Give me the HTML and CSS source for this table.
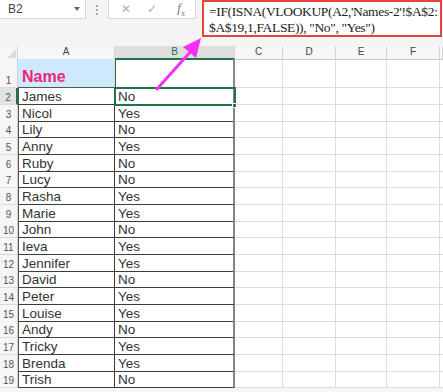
FILE: index.html
```html
<!DOCTYPE html>
<html>
<head>
<meta charset="utf-8">
<link rel="stylesheet" href="styles.css">
</head>
<body>
<div class="page">
  <div class="topbar">
    <div class="namebox"><span class="nb-text">B2</span><span class="nb-arrow"></span></div>
    <div class="dots"><i></i><i></i><i></i></div>
    <div class="funcs">
      <span class="fbtn x">&#x2715;</span>
      <span class="fbtn ok">&#x2713;</span>
      <span class="fbtn fx"><i>f</i><sub>x</sub></span>
    </div>
    <div class="formula">=IF(ISNA(VLOOKUP(A2,'Names-2'!$A$2:<br>$A$19,1,FALSE)), "No", "Yes")</div>
  </div>
  <div class="sheet">
    <div class="row head">
      <div class="c rn corner"><span class="tri"></span></div>
      <div class="c ca">A</div><div class="c cb sel">B</div><div class="c cc">C</div><div class="c cd">D</div><div class="c ce">E</div><div class="c cf">F</div><div class="c cg"></div>
    </div>
    <div class="row r1">
      <div class="c rn">1</div>
      <div class="c ca name">Name</div><div class="c cb b1"></div><div class="c cc"></div><div class="c cd"></div><div class="c ce"></div><div class="c cf"></div><div class="c cg"></div>
    </div>
    <div class="row d"><div class="c rn selrn">2</div><div class="c ca t">James</div><div class="c cb t active">No<span class="handle"></span></div><div class="c cc"></div><div class="c cd"></div><div class="c ce"></div><div class="c cf"></div><div class="c cg"></div></div>
    <div class="row d"><div class="c rn">3</div><div class="c ca t">Nicol</div><div class="c cb t">Yes</div><div class="c cc"></div><div class="c cd"></div><div class="c ce"></div><div class="c cf"></div><div class="c cg"></div></div>
    <div class="row d"><div class="c rn">4</div><div class="c ca t">Lily</div><div class="c cb t">No</div><div class="c cc"></div><div class="c cd"></div><div class="c ce"></div><div class="c cf"></div><div class="c cg"></div></div>
    <div class="row d"><div class="c rn">5</div><div class="c ca t">Anny</div><div class="c cb t">Yes</div><div class="c cc"></div><div class="c cd"></div><div class="c ce"></div><div class="c cf"></div><div class="c cg"></div></div>
    <div class="row d"><div class="c rn">6</div><div class="c ca t">Ruby</div><div class="c cb t">No</div><div class="c cc"></div><div class="c cd"></div><div class="c ce"></div><div class="c cf"></div><div class="c cg"></div></div>
    <div class="row d"><div class="c rn">7</div><div class="c ca t">Lucy</div><div class="c cb t">No</div><div class="c cc"></div><div class="c cd"></div><div class="c ce"></div><div class="c cf"></div><div class="c cg"></div></div>
    <div class="row d"><div class="c rn">8</div><div class="c ca t">Rasha</div><div class="c cb t">Yes</div><div class="c cc"></div><div class="c cd"></div><div class="c ce"></div><div class="c cf"></div><div class="c cg"></div></div>
    <div class="row d"><div class="c rn">9</div><div class="c ca t">Marie</div><div class="c cb t">Yes</div><div class="c cc"></div><div class="c cd"></div><div class="c ce"></div><div class="c cf"></div><div class="c cg"></div></div>
    <div class="row d"><div class="c rn">10</div><div class="c ca t">John</div><div class="c cb t">No</div><div class="c cc"></div><div class="c cd"></div><div class="c ce"></div><div class="c cf"></div><div class="c cg"></div></div>
    <div class="row d"><div class="c rn">11</div><div class="c ca t">Ieva</div><div class="c cb t">Yes</div><div class="c cc"></div><div class="c cd"></div><div class="c ce"></div><div class="c cf"></div><div class="c cg"></div></div>
    <div class="row d"><div class="c rn">12</div><div class="c ca t">Jennifer</div><div class="c cb t">Yes</div><div class="c cc"></div><div class="c cd"></div><div class="c ce"></div><div class="c cf"></div><div class="c cg"></div></div>
    <div class="row d"><div class="c rn">13</div><div class="c ca t">David</div><div class="c cb t">No</div><div class="c cc"></div><div class="c cd"></div><div class="c ce"></div><div class="c cf"></div><div class="c cg"></div></div>
    <div class="row d"><div class="c rn">14</div><div class="c ca t">Peter</div><div class="c cb t">Yes</div><div class="c cc"></div><div class="c cd"></div><div class="c ce"></div><div class="c cf"></div><div class="c cg"></div></div>
    <div class="row d"><div class="c rn">15</div><div class="c ca t">Louise</div><div class="c cb t">Yes</div><div class="c cc"></div><div class="c cd"></div><div class="c ce"></div><div class="c cf"></div><div class="c cg"></div></div>
    <div class="row d"><div class="c rn">16</div><div class="c ca t">Andy</div><div class="c cb t">No</div><div class="c cc"></div><div class="c cd"></div><div class="c ce"></div><div class="c cf"></div><div class="c cg"></div></div>
    <div class="row d"><div class="c rn">17</div><div class="c ca t">Tricky</div><div class="c cb t">Yes</div><div class="c cc"></div><div class="c cd"></div><div class="c ce"></div><div class="c cf"></div><div class="c cg"></div></div>
    <div class="row d"><div class="c rn">18</div><div class="c ca t">Brenda</div><div class="c cb t">Yes</div><div class="c cc"></div><div class="c cd"></div><div class="c ce"></div><div class="c cf"></div><div class="c cg"></div></div>
    <div class="row d"><div class="c rn">19</div><div class="c ca t">Trish</div><div class="c cb t">No</div><div class="c cc"></div><div class="c cd"></div><div class="c ce"></div><div class="c cf"></div><div class="c cg"></div></div>
  </div>
  <svg class="arrow" width="443" height="392" viewBox="0 0 443 392">
    <line x1="157" y1="89" x2="192" y2="50" stroke="#f530f5" stroke-width="3" stroke-linecap="round"/>
    <polygon points="201,38 183,47 196,58" fill="#f530f5"/>
  </svg>
</div>
</body>
</html>
```
FILE: styles.css
```css
* { box-sizing: border-box; }
html, body { margin: 0; padding: 0; background: #ffffff; }
.page {
  position: relative;
  width: 443px;
  height: 392px;
  overflow: hidden;
  font-family: "Liberation Sans", Arial, sans-serif;
  background: #f6f6f6;
}
.topbar {
  display: flex;
  align-items: flex-start;
  height: 46px;
  background: #f4f4f4;
}
.namebox {
  width: 86px;
  height: 19px;
  background: #fff;
  border: 1px solid #d6d6d6;
  border-top: none;
  border-left: none;
  display: flex;
  align-items: center;
  justify-content: space-between;
  padding: 0 5px 0 8px;
  font-size: 12px;
  color: #444;
}
.nb-arrow {
  width: 0; height: 0;
  border-left: 3px solid transparent;
  border-right: 3px solid transparent;
  border-top: 4px solid #666;
}
.dots {
  width: 22px;
  height: 19px;
  display: flex;
  flex-direction: column;
  align-items: center;
  justify-content: center;
  gap: 2px;
}
.dots i { display: block; width: 2px; height: 2px; background: #a8a8a8; }
.funcs {
  width: 88px;
  height: 19px;
  background: #fff;
  border: 1px solid #d6d6d6;
  border-top: none;
  display: flex;
  align-items: center;
  justify-content: space-around;
  padding: 0 2px 0 4px;
  color: #b0b0b0;
  font-size: 12px;
}
.fbtn.fx { color: #777; font-family: "Liberation Serif", serif; font-size: 13px; margin-left: 4px; }
.fbtn.fx sub { font-size: 8px; }
.formula {
  margin-left: 6px;
  width: 240px;
  height: 37px;
  border: 2px solid #e8433a;
  background: #fff;
  font-family: "Liberation Serif", "Times New Roman", serif;
  font-size: 13.5px;
  line-height: 16px;
  color: #222;
  padding: 2px 0 0 5px;
  white-space: nowrap;
  letter-spacing: -0.35px;
}
.sheet { background: #fff; }
.row {
  display: grid;
  grid-template-columns: 18px 97px 120px 48px 53px 51px 53px 3px;
}
.head { height: 13px; background: #f6f6f6; }
.r1 { height: 29px; }
.d { height: 16.67px; }
.c {
  border-right: 1px solid #dcdcdc;
  border-bottom: 1px solid #dcdcdc;
  position: relative;
}
.head .c {
  font-size: 10px;
  color: #444;
  text-align: center;
  line-height: 12px;
  border-bottom: 1px solid #c8c8c8;
  border-right: 1px solid #d4d4d4;
}
.head .cb.sel {
  background: #dedede;
  color: #217346;
  border-bottom: 2px solid #217346;
}
.corner { border-right: 1px solid #d4d4d4; }
.tri {
  position: absolute;
  right: 1px; bottom: 1px;
  width: 0; height: 0;
  border-left: 9px solid transparent;
  border-bottom: 9px solid #dcdcdc;
}
.rn {
  background: #f6f6f6;
  font-size: 10px;
  color: #555;
  text-align: center;
  display: flex;
  align-items: flex-end;
  justify-content: center;
  padding-bottom: 1px;
  border-right: 1px solid #cfcfcf;
  border-bottom: 1px solid #dcdcdc;
}
.rn.selrn { color: #217346; background: #e2e2e2; border-right: 2px solid #217346; }
.name {
  background: #cde9fb;
  color: #f0237a;
  font-weight: bold;
  font-size: 16px;
  display: flex;
  align-items: flex-end;
  padding: 0 0 1px 4px;
  border-bottom: 1px solid #555;
}
.b1 { border-left: 1px solid #2f6b45; border-bottom: 1px solid #555; border-right: 2px solid #888; }
.t {
  font-size: 13.5px;
  color: #333;
  line-height: 15px;
  padding: 1px 0 0 3px;
  border-bottom: 1px solid #3c3c3c;
  border-right: 1px solid #3c3c3c;
}
.ca.t { border-left: 1px solid #555; }
.cb.t { border-right: 2px solid #858585; }
.active {
  outline: 2px solid #217346;
  outline-offset: -1px;
  z-index: 2;
}
.handle {
  position: absolute;
  right: -4px; bottom: -4px;
  width: 5px; height: 5px;
  background: #217346;
  border: 1px solid #fff;
}
.cg { border-right: none; }
.arrow { position: absolute; left: 0; top: 0; pointer-events: none; z-index: 5; }
```
